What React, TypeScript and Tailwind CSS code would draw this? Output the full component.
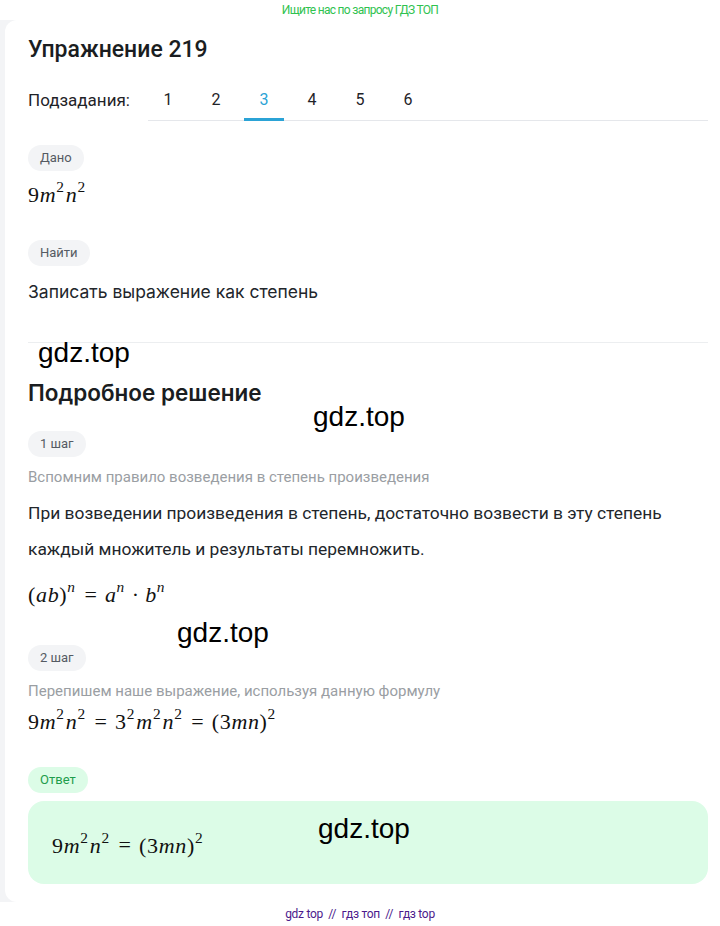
import React from "react";

const serif = { fontFamily: '"Liberation Serif", "DejaVu Serif", serif' };
const inter = { fontFamily: 'Inter, "Noto Sans", sans-serif' };

function I({ children }: { children: React.ReactNode }) {
  return <span className="italic">{children}</span>;
}
function Sup({ children }: { children: React.ReactNode }) {
  return <span className="text-[0.7em] align-[0.62em] leading-none not-italic mr-[0.08em]">{children}</span>;
}
function Eq() {
  return <span className="mx-[0.34em]">=</span>;
}

function Pill({ children, green }: { children: React.ReactNode; green?: boolean }) {
  return (
    <div
      className={
        "inline-flex items-center h-[26px] px-[12px] rounded-full text-[13px] " +
        (green ? "bg-[#dcfce7] text-[#1f9d4c]" : "bg-[#f3f4f6] text-[#555b63]")
      }
    >
      {children}
    </div>
  );
}

function Watermark({ x, y }: { x: number; y: number }) {
  return (
    <div
      className="absolute text-[28px] leading-none text-black pointer-events-none"
      style={{ left: x, top: y, fontFamily: '"Liberation Sans", Arial, sans-serif' }}
    >
      gdz.top
    </div>
  );
}

function Math({ children, className }: { children: React.ReactNode; className?: string }) {
  return (
    <div
      className={"h-[28px] whitespace-nowrap text-[22px] leading-[28px] tracking-[0.03em] text-[#111] " + (className || "")}
      style={serif}
    >
      {children}
    </div>
  );
}

export default function App() {
  const sans = { fontFamily: 'Roboto, "Noto Sans", sans-serif' };
  return (
    <div className="relative w-[720px] min-h-[926px] bg-white" style={sans}>
      <div className="h-[20px] flex items-center justify-center">
        <span className="text-[12px] text-[#2fc24f] tracking-[-0.7px]">Ищите нас по запросу ГДЗ ТОП</span>
      </div>
      <div className="bg-[#f3f4f6] pl-[5px]">
        <div className="bg-white rounded-l-[12px] pl-[23px] pr-[12px] pt-[16px] pb-[18px]">
          <h1 className="text-[23px] leading-[28px] font-medium text-[#1a1d21]">Упражнение 219</h1>
          <div className="mt-[16px] flex items-end">
            <div className="text-[17px] text-[#1f2328] h-[41px] flex items-center w-[120px]">Подзадания:</div>
            <div className="flex-1 flex gap-[8px] border-b border-[#e5e7eb]">
              {[1, 2, 3, 4, 5, 6].map((n) => (
                <div
                  key={n}
                  className={
                    "w-[40px] h-[40px] flex items-center justify-center text-[16px] border-b-[3px] -mb-px " +
                    (n === 3 ? "border-[#2ba3d6] text-[#2ba3d6]" : "border-transparent text-[#1f2328]")
                  }
                >
                  {n}
                </div>
              ))}
            </div>
          </div>

          <div className="mt-[24px]">
            <Pill>Дано</Pill>
          </div>
          <Math className="mt-[8px]">
            9<I>m</I><Sup>2</Sup><I>n</I><Sup>2</Sup>
          </Math>
          <div className="mt-[33px]">
            <Pill>Найти</Pill>
          </div>
          <div className="mt-[14px] text-[17.5px] leading-[24px] text-[#22262b]" style={inter}>
            Записать выражение как степень
          </div>
          <div className="mt-[38px] border-t border-[#eceef0]" />

          <h2 className="mt-[36px] text-[22.5px] leading-[28px] font-semibold text-[#1a1d21]" style={inter}>
            Подробное решение
          </h2>

          <div className="mt-[24px]">
            <Pill>1 шаг</Pill>
          </div>
          <div className="mt-[9px] text-[15px] leading-[22px] text-[#9a9ea3]">
            Вспомним правило возведения в степень произведения
          </div>
          <div className="mt-[7px] text-[17.4px] leading-[36px] text-[#22262b]">
            При возведении произведения в степень, достаточно возвести в эту степень каждый множитель и результаты перемножить.
          </div>
          <Math className="mt-[12px]">
            (<I>ab</I>)<Sup><I>n</I></Sup><Eq /><I>a</I><Sup><I>n</I></Sup><span className="mx-[0.25em]">·</span><I>b</I><Sup><I>n</I></Sup>
          </Math>

          <div className="mt-[38px]">
            <Pill>2 шаг</Pill>
          </div>
          <div className="mt-[9px] text-[15px] leading-[22px] text-[#9a9ea3]">
            Перепишем наше выражение, используя данную формулу
          </div>
          <Math className="mt-[4px]">
            9<I>m</I><Sup>2</Sup><I>n</I><Sup>2</Sup><Eq />3<Sup>2</Sup><I>m</I><Sup>2</Sup><I>n</I><Sup>2</Sup><Eq />(3<I>mn</I>)<Sup>2</Sup>
          </Math>

          <div className="mt-[33px]">
            <Pill green>Ответ</Pill>
          </div>
          <div className="mt-[8px] h-[83px] rounded-[16px] bg-[#dcfce7] flex items-center pl-[24px]">
            <Math className="mt-[2px]">
              9<I>m</I><Sup>2</Sup><I>n</I><Sup>2</Sup><Eq />(3<I>mn</I>)<Sup>2</Sup>
            </Math>
          </div>
        </div>
      </div>
      <div className="h-[24px] flex items-center justify-center text-[12px] text-[#4b1a8c] tracking-[-0.3px]">
        gdz top&nbsp;&nbsp;//&nbsp;&nbsp;гдз топ&nbsp;&nbsp;//&nbsp;&nbsp;гдз top
      </div>

      <Watermark x={38} y={339} />
      <Watermark x={313} y={403} />
      <Watermark x={177} y={619} />
      <Watermark x={318} y={815} />
    </div>
  );
}
